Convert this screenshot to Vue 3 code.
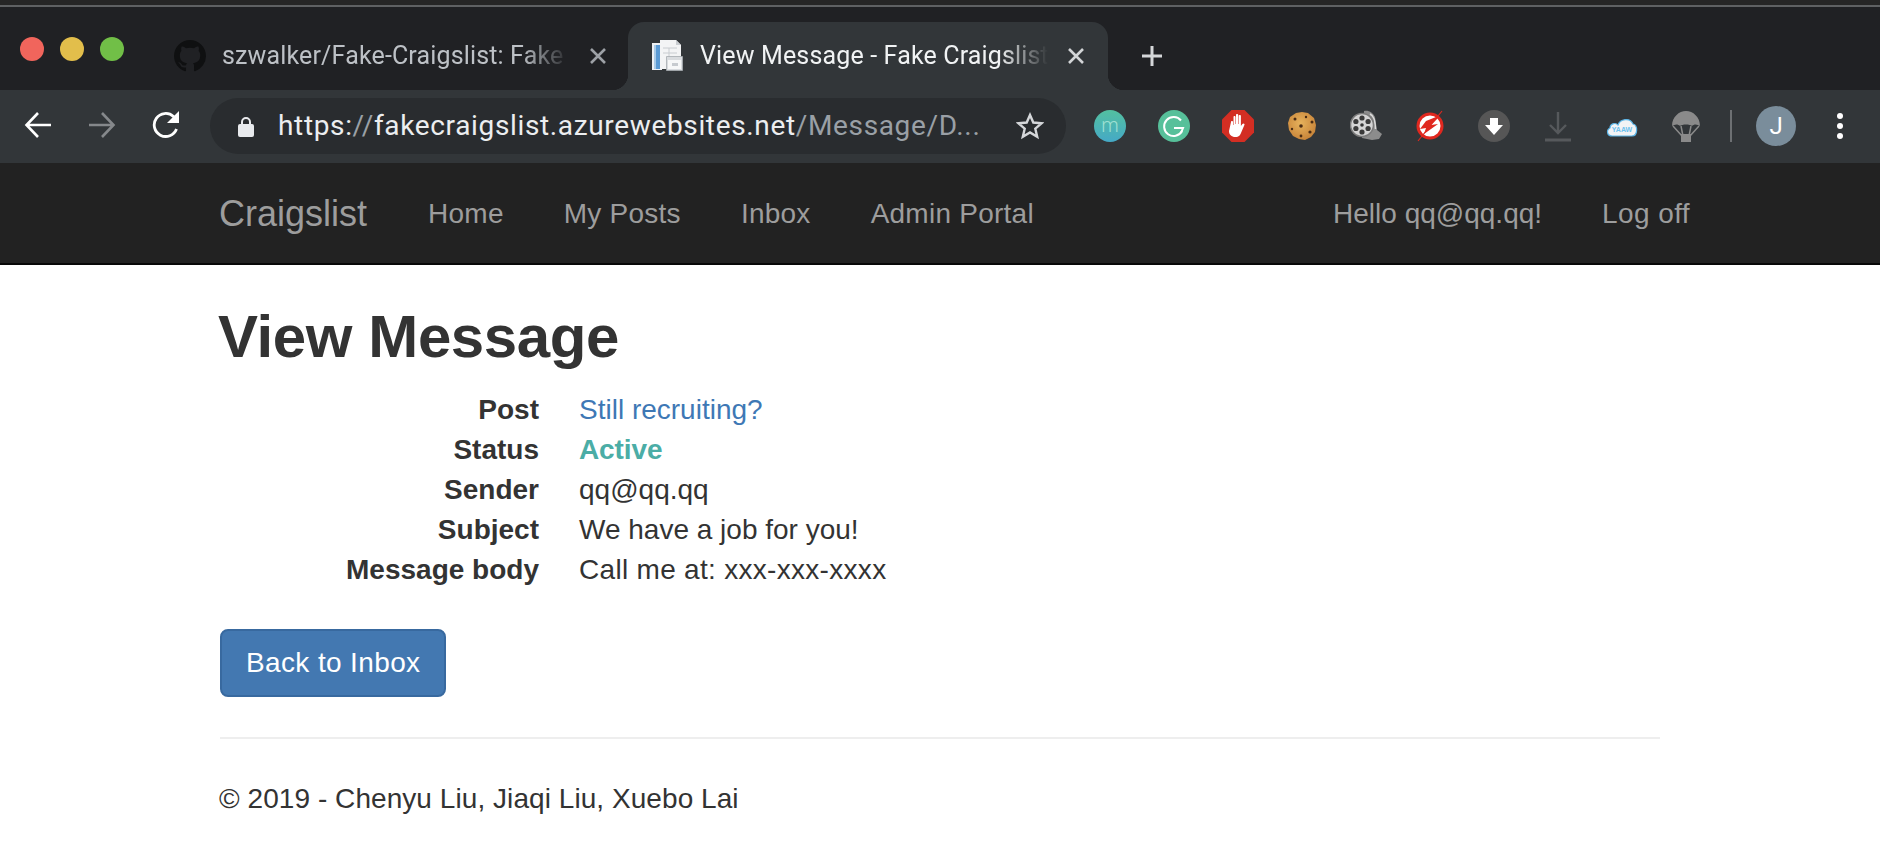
<script setup>
const navLinks = ['Home', 'My Posts', 'Inbox', 'Admin Portal']
const rows = [
  { label: 'Post', value: 'Still recruiting?', kind: 'link' },
  { label: 'Status', value: 'Active', kind: 'status' },
  { label: 'Sender', value: 'qq@qq.qq' },
  { label: 'Subject', value: 'We have a job for you!' },
  { label: 'Message body', value: 'Call me at: xxx-xxx-xxxx', kind: 'wide' },
]
</script>

<template>
  <div class="page">
    <div class="window-edge"></div>

    <div class="tabstrip">
      <div class="lights">
        <span class="light red"></span>
        <span class="light yellow"></span>
        <span class="light green"></span>
      </div>

      <div class="tab">
        <svg class="favicon" viewBox="0 0 16 16">
          <path fill="#0f1011" d="M8 0C3.58 0 0 3.58 0 8c0 3.54 2.29 6.53 5.47 7.59.4.07.55-.17.55-.38 0-.19-.01-.82-.01-1.49-2.01.37-2.53-.49-2.69-.94-.09-.23-.48-.94-.82-1.13-.28-.15-.68-.52-.01-.53.63-.01 1.08.58 1.23.82.72 1.21 1.87.87 2.33.66.07-.52.28-.87.51-1.07-1.78-.2-3.64-.89-3.64-3.95 0-.87.31-1.59.82-2.15-.08-.2-.36-1.02.08-2.12 0 0 .67-.21 2.2.82.64-.18 1.32-.27 2-.27.68 0 1.36.09 2 .27 1.53-1.04 2.2-.82 2.2-.82.44 1.1.16 1.92.08 2.12.51.56.82 1.27.82 2.15 0 3.07-1.87 3.75-3.65 3.95.29.25.54.73.54 1.48 0 1.07-.01 1.93-.01 2.2 0 .21.15.46.55.38A8.013 8.013 0 0016 8c0-4.42-3.58-8-8-8z" />
        </svg>
        <span class="tab-title">szwalker/Fake-Craigslist: Fake</span>
        <svg class="tab-close" viewBox="0 0 24 24"><path d="M5 5l14 14M19 5L5 19" /></svg>
      </div>

      <div class="tab active">
        <svg class="favicon" viewBox="0 0 32 32">
          <path fill="#eef1f4" d="M1 3h10v27H1z" />
          <path fill="#5b9bd5" d="M3 5h6v24H3z" />
          <path fill="#a9cbe8" d="M3 5h2v24H3z" />
          <path fill="#f3f4f5" d="M9 0h16l5 5v24H9z" />
          <path fill="#c9cdd1" d="M25 0l5 5h-5z" />
          <path fill="none" stroke="#c8ccd0" d="M12 8h14M12 13h14M18 8v10" />
          <path fill="#d9dcdf" stroke="#a6abb0" stroke-width=".8" d="M15.500 16.500h16v14h-16z" />
          <path fill="#f7f8f8" d="M17 20h13v9H17z" />
          <path fill="#c7cbcf" d="M21 23h6v3h-6z" />
        </svg>
        <span class="tab-title">View Message - Fake Craigslist</span>
        <svg class="tab-close" viewBox="0 0 24 24"><path d="M5 5l14 14M19 5L5 19" /></svg>
      </div>

      <svg class="new-tab" viewBox="0 0 24 24"><path d="M12 2v20M2 12h20" /></svg>
    </div>

    <div class="toolbar">
      <svg class="tool-btn" viewBox="0 0 28 28">
        <path fill="none" stroke="#fff" stroke-width="2.6" d="M27 14H3M14 2L2.500 14 14 26" />
      </svg>
      <svg class="tool-btn forward" viewBox="0 0 28 28">
        <path fill="none" stroke="#85888b" stroke-width="2.6" d="M1 14h24M14 2l11.500 12L14 26" />
      </svg>
      <svg class="tool-btn reload" viewBox="0 0 28 28">
        <path fill="none" stroke="#fff" stroke-width="2.8" d="M24.500 18A11.500 11.500 0 1 1 21.500 5.500L24 8" />
        <path fill="#fff" d="M27 0v12H15z" />
      </svg>

      <div class="omnibox">
        <svg class="lock" viewBox="0 0 16 21">
          <path fill="none" stroke="#e8eaed" stroke-width="2" d="M4 10V6a4 4 0 0 1 8 0v4" />
          <rect x="0" y="8" width="16" height="13" rx="2" fill="#e8eaed" />
        </svg>
        <span class="url">https:<span class="url-dim">//</span>fakecraigslist.azurewebsites.net<span class="url-dim">/Message/D...</span></span>
        <svg class="star" viewBox="0 0 28 28">
          <path fill="none" stroke="#d5d7da" stroke-width="2.4" d="M14 3l3.300 7.500 8.200.8-6.200 5.400 1.900 8L14 20.500l-7.200 4.200 1.900-8-6.200-5.400 8.200-.8z" />
        </svg>
      </div>

      <div class="extensions">
        <svg class="ext" viewBox="0 0 32 32">
          <defs>
            <linearGradient id="mint" x1="0" y1="0" x2="0" y2="1">
              <stop offset="0" stop-color="#53c0a0" />
              <stop offset="1" stop-color="#45a9c6" />
            </linearGradient>
          </defs>
          <circle cx="16" cy="16" r="16" fill="url(#mint)" />
          <text x="16" y="22" text-anchor="middle" class="ext-m">m</text>
        </svg>
        <svg class="ext" viewBox="0 0 32 32">
          <circle cx="16" cy="16" r="16" fill="#57c09a" />
          <path fill="none" stroke="#fff" stroke-width="2" d="M23 10.500A9.500 9.500 0 1 0 24 21" />
          <path fill="none" stroke="#fff" stroke-width="2" d="M16 18h9l-2 5" />
        </svg>
        <svg class="ext" viewBox="0 0 32 32">
          <path fill="#d32e23" d="M9.500 0h13L32 9.500v13L22.500 32h-13L0 22.500v-13z" />
          <path fill="#fff" d="M9 12c0-1.300 2-1.300 2 0v3h.5V7c0-1.400 2-1.400 2 0v7h.5V5c0-1.400 2.200-1.400 2.200 0v9h.5V6c0-1.400 2.200-1.400 2.200 0v10l1.500-2c1-1.300 2.700-.3 2 1l-3 7c-1 3-2.500 5-6 5-4 0-6.400-2.500-6.400-6z" />
        </svg>
        <svg class="ext" viewBox="0 0 32 32">
          <defs>
            <radialGradient id="crumb" cx=".45" cy=".4" r=".6">
              <stop offset="0" stop-color="#e6b25c" />
              <stop offset="1" stop-color="#c8853a" />
            </radialGradient>
          </defs>
          <path fill="url(#crumb)" d="M10 3l6-1 6 1 6 5 2 7-1 7-4 5-6 3-6-1-6-3-4-6-1-7 2-6z" />
          <g fill="#4a2c14">
            <circle cx="9" cy="9" r="1.500" />
            <circle cx="20" cy="7" r="1.200" />
            <circle cx="26" cy="12" r="1.500" />
            <circle cx="15" cy="16" r="1.800" />
            <circle cx="6" cy="19" r="1.200" />
            <circle cx="24" cy="22" r="1.600" />
            <circle cx="15" cy="26" r="1.400" />
          </g>
        </svg>
        <svg class="ext" viewBox="0 0 32 32">
          <path fill="#8c8c8c" d="M14 1c5-1 9 2 11 6l2 13 5 4-3 5-7 1-10-2z" />
          <path fill="none" stroke="#dcdcdc" stroke-width="1.500" d="M20 4c4 2 5 6 5.500 15" />
          <circle cx="12" cy="15" r="11.500" fill="#d4d4d4" stroke="#7a7a7a" stroke-width="1.500" />
          <circle cx="12" cy="15" r="1.800" fill="#333" />
          <g fill="#3a3a3a">
            <circle cx="12" cy="8" r="2.600" />
            <circle cx="12" cy="22" r="2.600" />
            <circle cx="5.900" cy="11.500" r="2.600" />
            <circle cx="18.100" cy="11.500" r="2.600" />
            <circle cx="5.900" cy="18.500" r="2.600" />
            <circle cx="18.100" cy="18.500" r="2.600" />
          </g>
        </svg>
        <svg class="ext" viewBox="0 0 32 32">
          <circle cx="16" cy="16" r="12" fill="#fff" stroke="#e0281f" stroke-width="3" />
          <path stroke="#e0281f" stroke-width="1.200" d="M4 31L28 1" />
          <path fill="#e0281f" d="M22 7l-10 4-6 8 6-1-2 6 14-10-7 1 7-7z" />
        </svg>
        <svg class="ext" viewBox="0 0 32 32">
          <circle cx="16" cy="16" r="16" fill="#565656" />
          <path fill="#fff" d="M12 8h8v7h5l-9 10-9-10h5z" />
        </svg>
        <svg class="ext" viewBox="0 0 32 32">
          <path fill="none" stroke="#56595c" stroke-width="2.4" d="M16 2v21M8 15l8 8 8-8" />
          <path fill="none" stroke="#56595c" stroke-width="3" d="M3 30h26" />
        </svg>
        <svg class="ext" viewBox="0 0 32 24">
          <path fill="#f2f3f5" stroke="#5cb6e8" stroke-width="1.200" d="M6 22C1 22 0 16 4 14c0-4 5-6 8-3 2-6 12-8 15-1 5 1 5 12-1 12z" />
          <text x="16" y="18" text-anchor="middle" class="ext-yaaw">YAAW</text>
        </svg>
        <svg class="ext" viewBox="0 0 32 32">
          <path fill="#8a8a8a" d="M2 16C2 7 9 1 16 1s14 6 14 15c-3-2-6-2-8 0-2-2-10-2-12 0-2-2-5-2-8 0z" />
          <path fill="none" stroke="#8a8a8a" stroke-width="1.5" d="M3 16l9 10M29 16l-9 10M11 16l2 10M21 16l-2 10" />
          <rect x="11" y="24" width="10" height="8" fill="#8a8a8a" />
        </svg>
      </div>

      <span class="toolbar-sep"></span>
      <span class="avatar">J</span>
      <span class="menu-dots"><i></i><i></i><i></i></span>
    </div>

    <nav class="navbar">
      <div class="nav-inner">
        <a class="brand">Craigslist</a>
        <a v-for="link in navLinks" :key="link" class="nav-link">{{ link }}</a>
        <div class="nav-right">
          <a class="nav-link">Hello qq@qq.qq!</a>
          <a class="nav-link">Log off</a>
        </div>
      </div>
    </nav>

    <main class="container">
      <h2>View Message</h2>
      <dl class="details">
        <template v-for="row in rows" :key="row.label">
          <dt>{{ row.label }}</dt>
          <dd :class="{ wide: row.kind === 'wide' }">
            <a v-if="row.kind === 'link'" class="post-link">{{ row.value }}</a>
            <strong v-else-if="row.kind === 'status'" class="status">{{ row.value }}</strong>
            <template v-else>{{ row.value }}</template>
          </dd>
        </template>
      </dl>
      <a class="btn">Back to Inbox</a>
      <hr />
      <footer>© 2019 - Chenyu Liu, Jiaqi Liu, Xuebo Lai</footer>
    </main>
  </div>
</template>

<style>
html, body { margin: 0; background: #fff; overflow: hidden; }
</style>

<style scoped>
.page {
  width: 1880px; height: 842px; overflow: hidden;
  font-family: "Liberation Sans", Arial, sans-serif; font-size: 28px; line-height: 40px; color: #333;
}

.window-edge { height: 5px; background: #262626; border-bottom: 2px solid #5f6163; }

.tabstrip { height: 83px; background: #202124; display: flex; align-items: stretch; }
.lights { display: flex; gap: 16px; margin-left: 20px; padding-top: 30px; }
.light { width: 24px; height: 24px; border-radius: 50%; }
.light.red { background: #f1655c; }
.light.yellow { background: #e2be4b; }
.light.green { background: #71bf47; }

.tab {
  width: 470px; margin: 15px 0 0 34px; padding: 0 18px 0 16px; box-sizing: border-box;
  display: flex; align-items: center; gap: 16px; position: relative;
  font-family: Roboto, "Liberation Sans", sans-serif; font-size: 25px; letter-spacing: .15px; color: #bdc1c6;
}
.tab.active {
  width: 480px; margin: 15px 0 0 0; padding: 0 20px 0 23px; background: #323639; color: #f1f3f4;
  border-radius: 16px 16px 0 0;
}
.tab.active .tab-title { padding-left: 1px; }
.tab.active::before, .tab.active::after {
  content: ""; position: absolute; bottom: 0; width: 16px; height: 16px;
}
.tab.active::before { left: -16px; background: radial-gradient(circle at 0 0, transparent 16px, #323639 16.5px); }
.tab.active::after { right: -16px; background: radial-gradient(circle at 100% 0, transparent 16px, #323639 16.5px); }

.favicon { width: 32px; height: 32px; flex: none; }
.tab-title {
  flex: 1; min-width: 0; white-space: nowrap; overflow: hidden;
  -webkit-mask-image: linear-gradient(to right, #000 86%, transparent 100%);
  mask-image: linear-gradient(to right, #000 86%, transparent 100%);
}
.tab-close { width: 24px; height: 24px; flex: none; fill: none; stroke: #9da1a6; stroke-width: 2.6; }
.tab.active .tab-close { stroke: #d2d4d6; }
.new-tab { width: 24px; height: 24px; margin: 37px 0 0 32px; fill: none; stroke: #d5d7d9; stroke-width: 3; }

.toolbar { height: 73px; background: #323639; display: flex; align-items: flex-start; }
.tool-btn { width: 28px; height: 28px; flex: none; margin: 21px 0 0 24px; }
.tool-btn.forward { margin-left: 36px; }
.tool-btn.reload { margin-left: 36px; }

.omnibox {
  width: 856px; height: 56px; margin: 8px 0 0 30px; background: #292c2f; border-radius: 28px;
  display: flex; align-items: center; position: relative; box-sizing: border-box; padding-left: 28px;
  font-family: Roboto, "Liberation Sans", sans-serif; font-size: 28px; color: #eceef0; white-space: nowrap;
}
.lock { width: 16px; height: 21px; flex: none; }
.url { margin-left: 24px; letter-spacing: .65px; }
.url-dim { color: #9aa0a6; }
.star { width: 28px; height: 28px; position: absolute; right: 22px; top: 14px; }

.extensions { display: flex; gap: 32px; margin: 20px 0 0 28px; align-items: center; height: 32px; }
.ext { width: 32px; height: 32px; flex: none; }
.ext-m { font-family: "Noto Sans", sans-serif; font-size: 20px; font-weight: 300; fill: #9fe0d4; }
.ext-yaaw { font-family: "Liberation Sans", sans-serif; font-size: 7px; font-weight: 700; fill: #6cc0ee; }

.toolbar-sep { width: 2px; height: 32px; background: #6d7073; margin: 20px 0 0 28px; }
.avatar {
  width: 40px; height: 40px; border-radius: 50%; background: #7a8d9b; color: #fff; margin: 16px 0 0 24px;
  text-align: center; font-family: Roboto, sans-serif; font-size: 24px; line-height: 40px; flex: none;
}
.menu-dots { display: flex; flex-direction: column; gap: 4px; margin: 23px 0 0 41px; }
.menu-dots i { display: block; width: 6px; height: 6px; background: #fff; border-radius: 50%; }

.navbar { height: 100px; background: #222; border-bottom: 2px solid #080808; }
.nav-inner {
  width: 1441px; margin-left: 219px; display: flex; align-items: center; height: 100px; padding-top: 2px;
  box-sizing: border-box; color: #9d9d9d;
}
.brand { font-size: 36px; margin-right: 61px; }
.nav-link { margin-right: 60px; letter-spacing: .25px; }
.nav-right { margin-left: auto; display: flex; margin-right: -30px; }
.nav-right .nav-link:first-child { letter-spacing: 0; margin-right: 60px; }
.nav-right .nav-link:last-child { margin-right: 0; letter-spacing: .4px; }

.container { width: 1440px; margin-left: 220px; }
h2 { font-size: 60px; line-height: 66px; font-weight: 700; margin: 39px 0 20px -2px; color: #333; letter-spacing: -.4px; }
.details { display: grid; grid-template-columns: 319px 1fr; column-gap: 40px; margin: 0 0 39px; }
dt { font-weight: 700; text-align: right; }
dd { margin: 0; }
dd.wide { letter-spacing: .3px; }
.post-link { color: #3e78b5; }
.status { color: #4bada6; letter-spacing: -.1px; }
.btn {
  display: inline-block; padding: 12px 24px; background: #4378b1; border: 2px solid #38699f; border-radius: 8px; color: #fff;
  letter-spacing: .37px;
}
hr { border: 0; border-top: 2px solid #eee; margin: 40px 0; }
footer { margin-left: -1px; letter-spacing: .06px; }
</style>
